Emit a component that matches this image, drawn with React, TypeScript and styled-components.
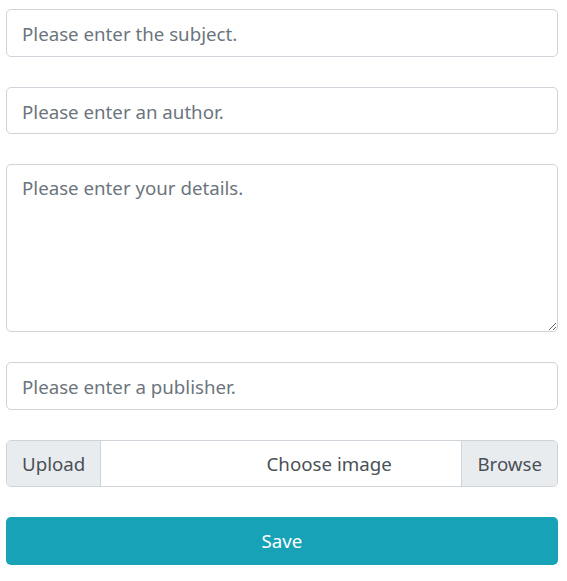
import React from "react";
import styled, { createGlobalStyle } from "styled-components";

const Global = createGlobalStyle`
  html, body { margin: 0; padding: 0; background: #fff; }
  body { font-family: "Noto Sans", "Open Sans", sans-serif; }
  * { box-sizing: border-box; }
`;

const Form = styled.form`
  display: flex;
  flex-direction: column;
  gap: 30px;
  padding: 9px 9px 0 6px;
`;

const fieldBase = `
  width: 100%;
  font-family: "Noto Sans", "Open Sans", sans-serif;
  font-size: 18.7px;
  color: #495057;
  background: #fff;
  border: 1px solid #ced4da;
  border-radius: 5px;
  padding: 8px 15px;
  outline: none;
  &::placeholder { color: #6c757d; opacity: 1; }
`;

const TextInput = styled.input`
  ${fieldBase}
  height: 47.5px;
  padding-top: 9px;
  padding-bottom: 7px;
`;

const TextArea = styled.textarea`
  ${fieldBase}
  height: 168px;
  resize: vertical;
  line-height: 1.5;
  padding-top: 9px;
`;

const Group = styled.div`
  display: grid;
  grid-template-columns: auto 1fr auto;
  height: 47.5px;
  border: 1px solid #ced4da;
  border-radius: 5px;
  overflow: hidden;
`;

const Addon = styled.span<{ $side: "left" | "right" }>`
  grid-row: 1;
  grid-column: ${(p) => (p.$side === "left" ? "1" : "3")};
  z-index: 1;
  display: flex;
  align-items: center;
  padding: 1px 15px 0;
  background: #e9ecef;
  color: #495057;
  font-size: 18.7px;
  ${(p) => (p.$side === "left" ? "border-right: 1px solid #ced4da;" : "border-left: 1px solid #ced4da;")}
`;

const FileLabel = styled.span`
  grid-row: 1;
  grid-column: 2 / 4;
  display: flex;
  align-items: center;
  justify-content: center;
  padding-top: 1px;
  color: #495057;
  font-size: 18.7px;
`;

const SaveButton = styled.button`
  height: 47.5px;
  border: none;
  border-radius: 5px;
  background: #17a2b8;
  color: #fff;
  font-family: "Noto Sans", "Open Sans", sans-serif;
  font-size: 18.7px;
  padding-top: 1px;
  cursor: pointer;
`;

export default function App() {
  return (
    <>
      <Global />
      <Form onSubmit={(e) => e.preventDefault()}>
        <TextInput placeholder="Please enter the subject." />
        <TextInput placeholder="Please enter an author." />
        <TextArea placeholder="Please enter your details." />
        <TextInput placeholder="Please enter a publisher." />
        <Group>
          <Addon $side="left">Upload</Addon>
          <FileLabel>Choose image</FileLabel>
          <Addon $side="right">Browse</Addon>
        </Group>
        <SaveButton type="submit">Save</SaveButton>
      </Form>
    </>
  );
}
